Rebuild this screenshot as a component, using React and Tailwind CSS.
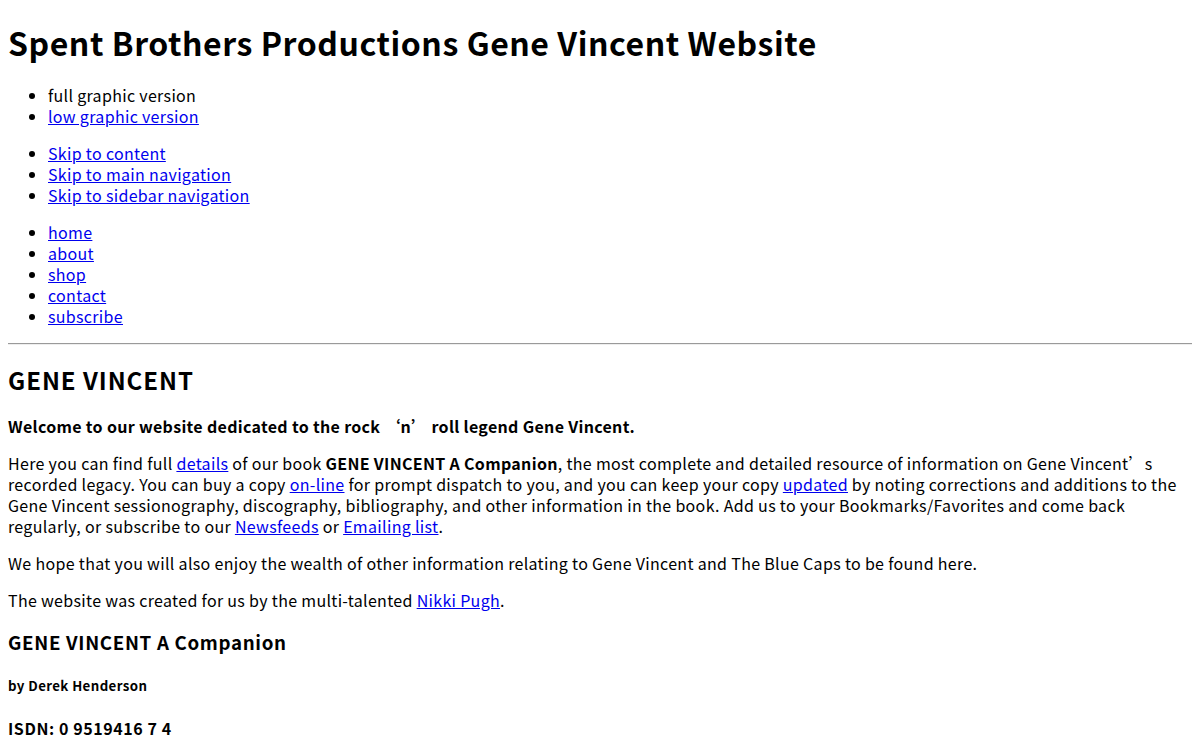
function A({children}){return <a href="#" className="text-[#0000ee] underline">{children}</a>}
export default function App(){
return <div className="m-2 font-['Noto_Sans_CJK_SC',sans-serif] tracking-[0.02em] text-black text-[16px] leading-[21px]">
<h1 className="text-[32px] font-bold leading-[42px] my-[21.44px] tracking-[0.0175em]">Spent Brothers Productions Gene Vincent Website</h1>
<ul className="list-disc pl-10 my-4">
<li>full graphic version</li>
<li><A>low graphic version</A></li>
</ul>
<ul className="list-disc pl-10 my-4">
<li><A>Skip to content</A></li>
<li><A>Skip to main navigation</A></li>
<li><A>Skip to sidebar navigation</A></li>
</ul>
<ul className="list-disc pl-10 my-4">
<li><A>home</A></li>
<li><A>about</A></li>
<li><A>shop</A></li>
<li><A>contact</A></li>
<li><A>subscribe</A></li>
</ul>
<hr className="my-2 h-0 border-t border-b border-t-[#9a9a9a] border-b-[#eeeeee]" />
<h2 className="text-[24px] font-bold leading-[32px] mt-[19px] mb-[19.92px] tracking-[0.04em]">GENE VINCENT</h2>
<p className="my-4 font-bold">Welcome to our website dedicated to the rock ‘n’ roll legend Gene Vincent.</p>
<p className="my-4">Here you can find full <A>details</A> of our book <b>GENE VINCENT A Companion</b>, the most complete and detailed resource of information on Gene Vincent’s recorded legacy. You can buy a copy <A>on-line</A> for prompt dispatch to you, and you can keep your copy <A>updated</A> by noting corrections and additions to the Gene Vincent sessionography, discography, bibliography, and other information in the book. Add us to your Bookmarks/Favorites and come back regularly, or subscribe to our <A>Newsfeeds</A> or <A>Emailing list</A>.</p>
<p className="my-4">We hope that you will also enjoy the wealth of other information relating to Gene Vincent and The Blue Caps to be found here.</p>
<p className="my-4">The website was created for us by the multi-talented <A>Nikki Pugh</A>.</p>
<h3 className="text-[18.72px] font-bold leading-[25px] mt-[18px] mb-[18.72px] tracking-[0.036em]">GENE VINCENT A Companion</h3>
<h5 className="text-[13.28px] font-bold leading-[17.5px] mt-[23px] mb-[22.18px] tracking-[0.03em]">by Derek Henderson</h5>
<h4 className="text-[16px] font-bold leading-[21px] mt-[24px] mb-[21.28px] tracking-[0.036em]">ISDN: 0 9519416 7 4</h4>
</div>
}
